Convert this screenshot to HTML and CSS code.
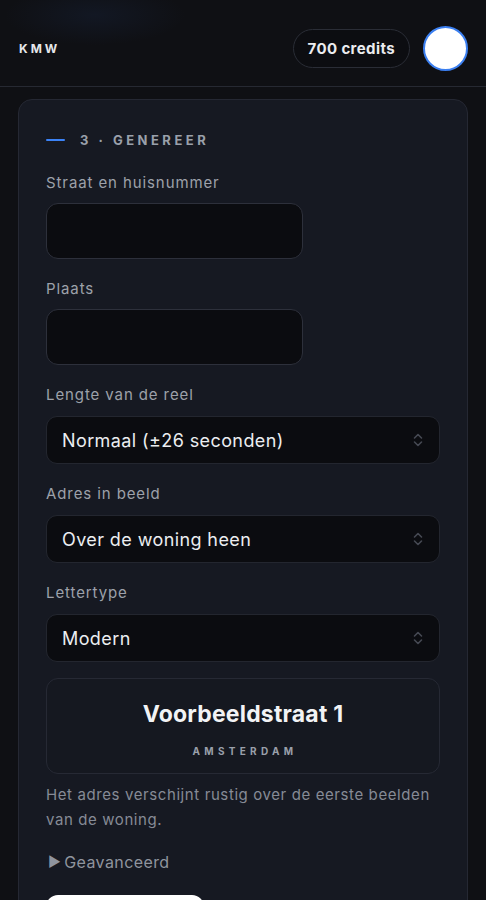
FILE: index.html
```html
<!DOCTYPE html>
<html lang="nl">
<head>
<meta charset="utf-8">
<title>KMW</title>
<link rel="stylesheet" href="styles.css">
</head>
<body>
<header class="topbar">
  <div class="brand">KMW</div>
  <div class="topbar-right">
    <div class="credits">700 credits</div>
    <div class="avatar"></div>
  </div>
</header>
<main class="main">
  <section class="card">
    <div class="step-title"><span class="step-line"></span><span>3 · GENEREER</span></div>

    <div class="field">
      <label class="label">Straat en huisnummer</label>
      <div class="input"></div>
    </div>
    <div class="field">
      <label class="label">Plaats</label>
      <div class="input"></div>
    </div>
    <div class="field">
      <label class="label">Lengte van de reel</label>
      <div class="select"><span>Normaal (±26 seconden)</span>
        <svg class="chev" width="10" height="16" viewBox="0 0 10 16"><path d="M1.5 6 L5 2.5 L8.5 6 M1.5 10 L5 13.5 L8.5 10" fill="none" stroke="#464953" stroke-width="1.6" stroke-linecap="round" stroke-linejoin="round"/></svg>
      </div>
    </div>
    <div class="field">
      <label class="label">Adres in beeld</label>
      <div class="select"><span>Over de woning heen</span>
        <svg class="chev" width="10" height="16" viewBox="0 0 10 16"><path d="M1.5 6 L5 2.5 L8.5 6 M1.5 10 L5 13.5 L8.5 10" fill="none" stroke="#464953" stroke-width="1.6" stroke-linecap="round" stroke-linejoin="round"/></svg>
      </div>
    </div>
    <div class="field">
      <label class="label">Lettertype</label>
      <div class="select"><span>Modern</span>
        <svg class="chev" width="10" height="16" viewBox="0 0 10 16"><path d="M1.5 6 L5 2.5 L8.5 6 M1.5 10 L5 13.5 L8.5 10" fill="none" stroke="#464953" stroke-width="1.6" stroke-linecap="round" stroke-linejoin="round"/></svg>
      </div>
    </div>

    <div class="preview">
      <div class="preview-street">Voorbeeldstraat 1</div>
      <div class="preview-city">AMSTERDAM</div>
    </div>
    <p class="hint">Het adres verschijnt rustig over de eerste beelden van de woning.</p>
    <div class="advanced"><span class="tri">▶&#xFE0E;</span> Geavanceerd</div>
    <div class="button"></div>
  </section>
</main>
</body>
</html>
```

FILE: styles.css
```css
* { box-sizing: border-box; }
html, body { margin: 0; padding: 0; }
body {
  background: #0f1014;
  font-family: "Inter", "Noto Sans", sans-serif;
  color: #e9eaee;
  height: 900px;
  overflow: hidden;
}
.topbar {
  height: 87px;
  display: flex;
  align-items: center;
  justify-content: space-between;
  padding: 10px 19px 0;
  border-bottom: 1px solid #262932;
  background: radial-gradient(ellipse 90px 30px at 95px 15px, rgba(30,50,90,0.22), transparent 100%);
}
.brand {
  font-size: 12px;
  font-weight: 700;
  letter-spacing: 3px;
  color: #e6e7ea;
}
.topbar-right { display: flex; align-items: center; gap: 13px; }
.credits {
  height: 39px;
  padding: 0 14px;
  border: 1px solid #2a2d36;
  border-radius: 20px;
  background: #0c0d11;
  display: flex;
  align-items: center;
  font-size: 15px;
  font-weight: 700;
  letter-spacing: 0.4px;
  color: #ebecef;
}
.avatar {
  width: 45px;
  height: 45px;
  border-radius: 50%;
  background: #ffffff;
  border: 2px solid #3b7ff0;
  margin-right: -1px;
}
.main { padding: 12px 18px 0; }
.card {
  background: #161922;
  border: 1px solid #252833;
  border-radius: 14px;
  padding: 31px 27px 40px;
  display: flex;
  flex-direction: column;
}
.step-title {
  display: flex;
  align-items: center;
  gap: 15px;
  font-size: 13px;
  font-weight: 700;
  letter-spacing: 3.5px;
  color: #9aa0ab;
  height: 18px;
}
.step-line { width: 19px; height: 2px; background: #3b82f6; border-radius: 1px; }
.field { display: flex; flex-direction: column; gap: 10px; margin-top: 24px; }
.field + .field { margin-top: 20px; }
.label {
  font-size: 15px;
  line-height: 20px;
  color: #9da1aa;
  letter-spacing: 0.9px;
}
.input {
  width: 257px;
  height: 56px;
  background: #0b0c10;
  border: 1px solid #2d303b;
  border-radius: 12px;
}
.select {
  height: 48px;
  background: #0b0c10;
  border: 1px solid #23262f;
  border-radius: 11px;
  display: flex;
  align-items: center;
  justify-content: space-between;
  padding: 0 16px 0 15px;
  font-size: 18px;
  letter-spacing: 0.4px;
  color: #eceef1;
  margin-top: 1px;
}
.chev { display: block; }
.preview {
  margin-top: 16px;
  height: 96px;
  border: 1px solid #262934;
  border-radius: 12px;
  background: #151820;
  display: flex;
  flex-direction: column;
  align-items: center;
  padding-top: 21px;
}
.preview-street {
  font-size: 23px;
  font-weight: 700;
  color: #f2f3f5;
  line-height: 28px;
  letter-spacing: 0.2px;
}
.preview-city {
  margin-top: 17px;
  font-size: 10px;
  font-weight: 700;
  letter-spacing: 4.3px;
  color: #9aa0ab;
  padding-left: 4px;
}
.hint {
  margin: 8px 0 0;
  font-size: 15px;
  line-height: 25px;
  color: #868b96;
  letter-spacing: 0.6px;
}
.advanced {
  margin-top: 20px;
  font-size: 16px;
  line-height: 20px;
  color: #8f949e;
  letter-spacing: 0.4px;
  display: flex;
  align-items: center;
  gap: 3px;
}
.tri { font-size: 14px; padding-left: 2px; color: #8f949e; }
.button {
  margin-top: 23px;
  width: 158px;
  height: 48px;
  background: #ffffff;
  border-radius: 12px;
}
```
